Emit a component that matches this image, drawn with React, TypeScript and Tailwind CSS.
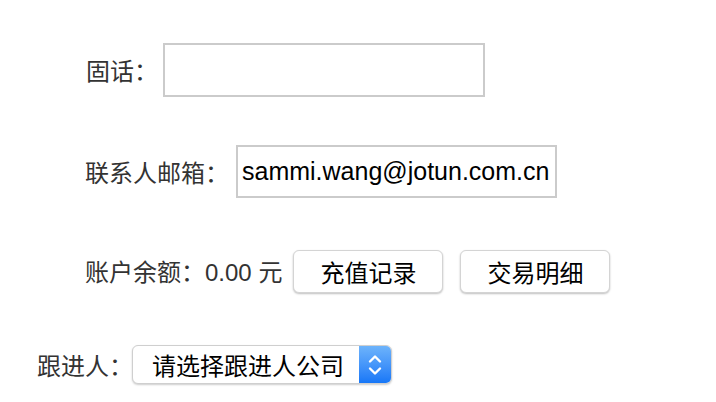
const cjk = "font-['PingFang_SC','Noto_Sans_CJK_SC',sans-serif]"

const Label = ({ children, className = "" }: { children: React.ReactNode; className?: string }) => (
  <span className={`text-[24px] leading-none text-[#333] ${cjk} ${className}`}>{children}</span>
)

const Button = ({ children }: { children: React.ReactNode }) => (
  <button
    className={`flex h-[43px] w-[150px] items-center justify-center rounded-[6px] border border-[#d4d4d4] bg-white text-[24px] leading-none text-black shadow-[0_1px_2px_rgba(0,0,0,0.25)] ${cjk}`}
  >
    {children}
  </button>
)

export default function App() {
  return (
    <div className="flex h-[402px] w-[716px] flex-col bg-white pt-[43px]">
      <div className="flex h-[54px] items-center pl-[86px]">
        <Label>固话：</Label>
        <input className="ml-[5px] h-[54px] w-[322px] border-2 border-[#cbcbcb] bg-white outline-none" />
      </div>

      <div className="mt-[48px] flex h-[53px] items-center pl-[85px]">
        <Label>联系人邮箱：</Label>
        <div className="ml-[7px] flex h-[53px] w-[321px] items-center border-2 border-[#cbcbcb] pl-[4px] font-['Liberation_Sans',Arial,sans-serif] text-[25px] leading-none text-black">
          sammi.wang@jotun.com.cn
        </div>
      </div>

      <div className="mt-[52px] flex h-[43px] items-center pl-[85px]">
        <Label>
          账户余额：<span className="font-['Liberation_Sans',Arial,sans-serif]">0.00 </span>元
        </Label>
        <div className="ml-[11px] flex gap-[17px]">
          <Button>充值记录</Button>
          <Button>交易明细</Button>
        </div>
      </div>

      <div className="mt-[52px] flex h-[39px] items-center pl-[37px]">
        <Label>跟进人：</Label>
        <div className="-ml-[1px] flex h-[39px] w-[260px] overflow-hidden rounded-[6px] border border-[#cfcfcf] bg-white shadow-[0_1px_2px_rgba(0,0,0,0.2)]">
          <span className={`flex flex-1 items-center pl-[19px] text-[24px] leading-none text-black ${cjk}`}>请选择跟进人公司</span>
          <span className="flex w-[32px] items-center justify-center bg-gradient-to-b from-[#6db3fb] to-[#1677f7]">
            <svg width="16" height="26" viewBox="0 0 16 26" fill="none" stroke="white" strokeWidth="2.4" strokeLinecap="round" strokeLinejoin="round">
              <path d="M3 9.5 L8 4.5 L13 9.5" />
              <path d="M3 16.5 L8 21.5 L13 16.5" />
            </svg>
          </span>
        </div>
      </div>
    </div>
  )
}
